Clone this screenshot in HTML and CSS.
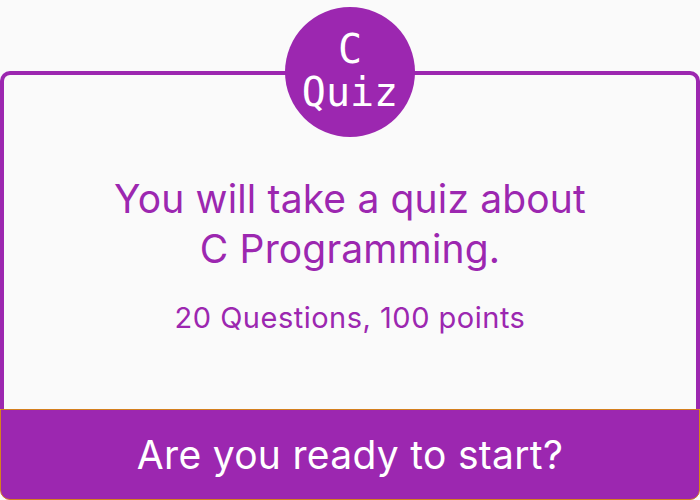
FILE: index.html
```html
<!DOCTYPE html>
<html lang="en">
<head>
<meta charset="utf-8">
<title>C Quiz</title>
<link rel="stylesheet" href="styles.css">
</head>
<body>
<div class="page">
  <div class="badge"><span>C</span><span>Quiz</span></div>
  <div class="card">
    <div class="card-body">
      <p class="headline">You will take a quiz about<br>C Programming.</p>
      <p class="meta">20 Questions, 100 points</p>
    </div>
    <div class="card-footer">Are you ready to start?</div>
  </div>
</div>
</body>
</html>
```
FILE: styles.css
```css
* { box-sizing: border-box; }
html, body { margin: 0; padding: 0; }
body {
  background: #fafafa;
  font-family: "Inter", "Noto Sans", sans-serif;
  width: 700px;
  height: 500px;
  overflow: hidden;
}
.page {
  display: flex;
  flex-direction: column;
  height: 500px;
  padding-top: 7px;
}
.badge {
  position: relative;
  z-index: 2;
  width: 130px;
  height: 130px;
  border-radius: 50%;
  background: #9c27b0;
  color: #fff;
  margin: 0 auto -66px;
  display: flex;
  flex-direction: column;
  align-items: center;
  justify-content: center;
  font-family: "DejaVu Sans Mono", monospace;
  font-size: 40px;
  line-height: 43px;
  padding-bottom: 2px;
}
.card {
  flex: 1;
  display: flex;
  flex-direction: column;
}
.card-body {
  flex: 1;
  border: 4px solid #9c27b0;
  border-bottom: none;
  border-radius: 10px 10px 0 0;
  display: flex;
  flex-direction: column;
  align-items: center;
  padding-top: 99px;
  color: #9c27b0;
  text-align: center;
}
.headline {
  margin: 0;
  font-size: 39px;
  line-height: 50px;
  letter-spacing: 0.15px;
}
.meta {
  margin: 28px 0 0;
  font-size: 29px;
  line-height: 32px;
  letter-spacing: 0.5px;
}
.card-footer {
  height: 91px;
  background: #9c27b0;
  border: 1px solid #d4801f;
  border-radius: 0 0 10px 10px;
  color: #fff;
  font-size: 39px;
  letter-spacing: 0.3px;
  display: flex;
  align-items: center;
  justify-content: center;
}
```
